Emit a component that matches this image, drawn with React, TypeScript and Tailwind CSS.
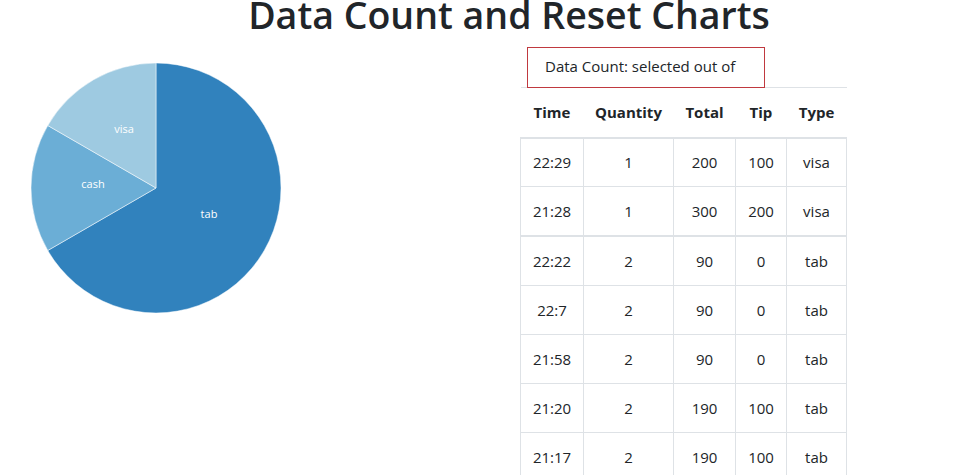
import React from "react";

const font = { fontFamily: '"Open Sans", "Noto Sans", sans-serif' };

type Row = [string, string, string, string, string];
const group1: Row[] = [
  ["22:29", "1", "200", "100", "visa"],
  ["21:28", "1", "300", "200", "visa"],
];
const group2: Row[] = [
  ["22:22", "2", "90", "0", "tab"],
  ["22:7", "2", "90", "0", "tab"],
  ["21:58", "2", "90", "0", "tab"],
  ["21:20", "2", "190", "100", "tab"],
  ["21:17", "2", "190", "100", "tab"],
];

function Pie() {
  return (
    <svg width="300" height="290" viewBox="0 0 300 290" className="block">
      <path d="M156,148 L156,23 A125,125 0 1 1 47.75,210.5 Z" fill="#3182bd" stroke="#ffffff" strokeWidth="0.5" />
      <path d="M156,148 L47.75,210.5 A125,125 0 0 1 47.75,85.5 Z" fill="#6baed6" stroke="#ffffff" strokeWidth="0.5" />
      <path d="M156,148 L47.75,85.5 A125,125 0 0 1 156,23 Z" fill="#9ecae1" stroke="#ffffff" strokeWidth="0.5" />
      <g fill="#ffffff" fontSize="11" textAnchor="middle" style={font}>
        <text x="209" y="178">tab</text>
        <text x="93" y="148">cash</text>
        <text x="124" y="93">visa</text>
      </g>
    </svg>
  );
}

function BodyRow({ r, first }: { r: Row; first?: boolean }) {
  const c = first
    ? "border border-t-2 border-[#dee2e6] h-[50px] p-0 text-center align-middle"
    : "border border-[#dee2e6] h-[49px] p-0 text-center align-middle";
  return (
    <tr>
      {r.map((v, i) => (
        <td key={i} className={c}>
          {v}
        </td>
      ))}
    </tr>
  );
}

export default function App() {
  return (
    <div className="w-[971px] h-[475px] overflow-hidden bg-white text-[#212529]" style={font}>
      <h1 className="pl-[47px] text-center text-[37.5px] font-semibold leading-[40px] -mt-[5px] h-[45px]">
        Data Count and Reset Charts
      </h1>
      <div className="flex">
        <Pie />
        <div className="ml-[220px] pt-[7px]">
          <div className="relative z-10 ml-[7px] w-[238px] h-[41px] border border-[#c0393f] pl-[17px] pb-[2px] flex items-center text-[15px]">
            Data Count: selected out of
          </div>
          <table className="-mt-[1px] w-[326px] table-fixed border-collapse text-[15px]">
            <colgroup>
              <col className="w-[63px]" />
              <col className="w-[90px]" />
              <col className="w-[62px]" />
              <col className="w-[51px]" />
              <col className="w-[60px]" />
            </colgroup>
            <thead>
              <tr>
                {["Time", "Quantity", "Total", "Tip", "Type"].map((h) => (
                  <th
                    key={h}
                    className="border-t border-b-2 border-[#dee2e6] h-[50px] p-0 text-center align-middle font-bold"
                  >
                    {h}
                  </th>
                ))}
              </tr>
            </thead>
            <tbody>
              {group1.map((r, i) => (
                <BodyRow key={i} r={r} />
              ))}
            </tbody>
            <tbody>
              {group2.map((r, i) => (
                <BodyRow key={i} r={r} first={i === 0} />
              ))}
            </tbody>
          </table>
        </div>
      </div>
    </div>
  );
}
